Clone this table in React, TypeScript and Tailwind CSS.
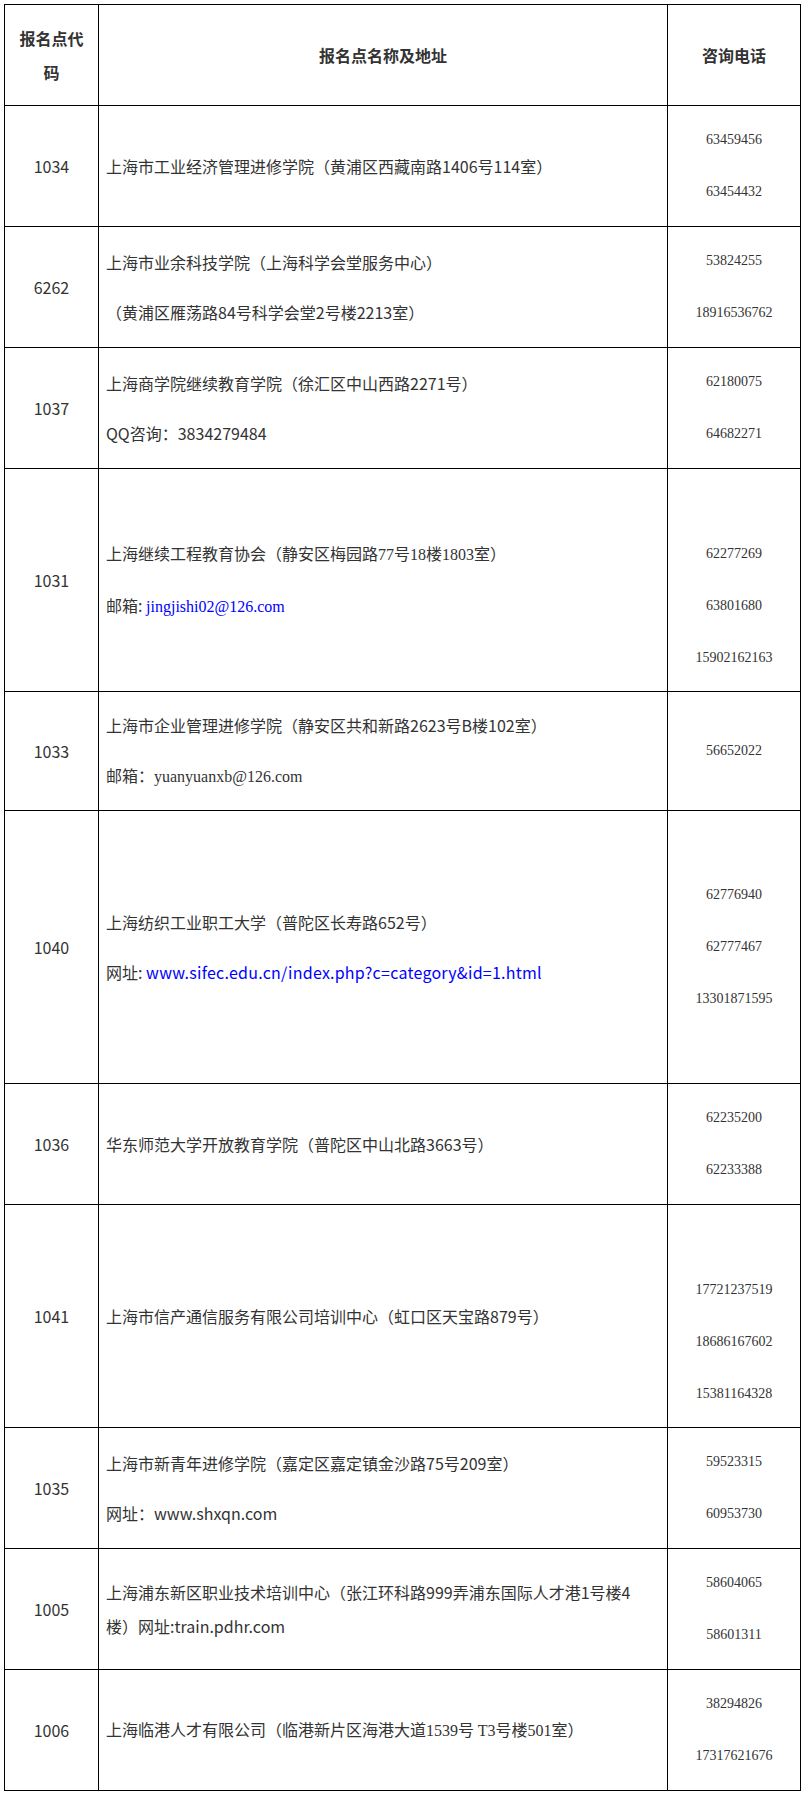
import type { ReactNode } from "react"

interface SiteRow {
  code: string
  height: string
  lines: ReactNode[]
  phones: string[]
  // extra blank line above the phone numbers, as in the source table
  phonePad?: boolean
}

const serif = "font-['Liberation_Serif','Times_New_Roman',serif]"

const rows: SiteRow[] = [
  {
    code: "1034",
    height: "h-[121px]",
    lines: ["上海市工业经济管理进修学院（黄浦区西藏南路1406号114室）"],
    phones: ["63459456", "63454432"],
  },
  {
    code: "6262",
    height: "h-[121px]",
    lines: ["上海市业余科技学院（上海科学会堂服务中心）", "（黄浦区雁荡路84号科学会堂2号楼2213室）"],
    phones: ["53824255", "18916536762"],
  },
  {
    code: "1037",
    height: "h-[121px]",
    lines: ["上海商学院继续教育学院（徐汇区中山西路2271号）", "QQ咨询：3834279484"],
    phones: ["62180075", "64682271"],
  },
  {
    code: "1031",
    height: "h-[223px]",
    lines: [
      <>
        上海继续工程教育协会（静安区梅园路<span className={serif}>77</span>号
        <span className={serif}>18</span>楼<span className={serif}>1803</span>室）
      </>,
      <>
        邮箱: <span className={`${serif} text-[#0000ff]`}>jingjishi02@126.com</span>
      </>,
    ],
    phones: ["62277269", "63801680", "15902162163"],
    phonePad: true,
  },
  {
    code: "1033",
    height: "h-[119px]",
    lines: [
      "上海市企业管理进修学院（静安区共和新路2623号B楼102室）",
      <>
        邮箱：<span className={serif}>yuanyuanxb@126.com</span>
      </>,
    ],
    phones: ["56652022"],
  },
  {
    code: "1040",
    height: "h-[273px]",
    lines: [
      "上海纺织工业职工大学（普陀区长寿路652号）",
      <>
        网址:{" "}
        <span className="tracking-[0.25px] text-[#0000ff]">www.sifec.edu.cn/index.php?c=category&amp;id=1.html</span>
      </>,
    ],
    phones: ["62776940", "62777467", "13301871595"],
  },
  {
    code: "1036",
    height: "h-[121px]",
    lines: ["华东师范大学开放教育学院（普陀区中山北路3663号）"],
    phones: ["62235200", "62233388"],
  },
  {
    code: "1041",
    height: "h-[223px]",
    lines: ["上海市信产通信服务有限公司培训中心（虹口区天宝路879号）"],
    phones: ["17721237519", "18686167602", "15381164328"],
    phonePad: true,
  },
  {
    code: "1035",
    height: "h-[121px]",
    lines: ["上海市新青年进修学院（嘉定区嘉定镇金沙路75号209室）", "网址：www.shxqn.com"],
    phones: ["59523315", "60953730"],
  },
  {
    code: "1005",
    height: "h-[121px]",
    lines: [
      <>
        上海浦东新区职业技术培训中心（张江环科路999弄浦东国际人才港1号楼4
        <br />
        楼）网址:train.pdhr.com
      </>,
    ],
    phones: ["58604065", "58601311"],
  },
  {
    code: "1006",
    height: "h-[121px]",
    lines: [
      <>
        上海临港人才有限公司（临港新片区海港大道<span className={serif}>1539</span>号{" "}
        <span className={serif}>T3</span>号楼<span className={serif}>501</span>室）
      </>,
    ],
    phones: ["38294826", "17317621676"],
  },
]

export default function App() {
  return (
    <div className="min-h-[1796px] bg-white pl-1 pt-1">
      <div className="w-[797px] border border-black text-[16px] leading-[34px] text-[#333] font-['Noto_Sans_CJK_SC','Noto_Sans',sans-serif]">
        {/* Header */}
        <div className="grid h-[100px] grid-cols-[94px_569px_132px] font-bold">
          <div className="flex items-center justify-center border-r border-black text-center">
            报名点代
            <br />
            码
          </div>
          <div className="flex items-center justify-center border-r border-black">报名点名称及地址</div>
          <div className="flex items-center justify-center">咨询电话</div>
        </div>

        {rows.map((row) => (
          <div key={row.code} className={`grid grid-cols-[94px_569px_132px] border-t border-black ${row.height}`}>
            <div className="flex items-center justify-center border-r border-black">{row.code}</div>
            <div className="flex flex-col justify-center gap-4 border-r border-black pl-[7px] whitespace-nowrap">
              {row.lines.map((line, i) => (
                <p key={i}>{line}</p>
              ))}
            </div>
            <div className={`flex flex-col items-center justify-center gap-[18px] text-[14px] ${serif}`}>
              {row.phonePad && <p aria-hidden="true">&nbsp;</p>}
              {row.phones.map((phone) => (
                <p key={phone}>{phone}</p>
              ))}
            </div>
          </div>
        ))}
      </div>
    </div>
  )
}
